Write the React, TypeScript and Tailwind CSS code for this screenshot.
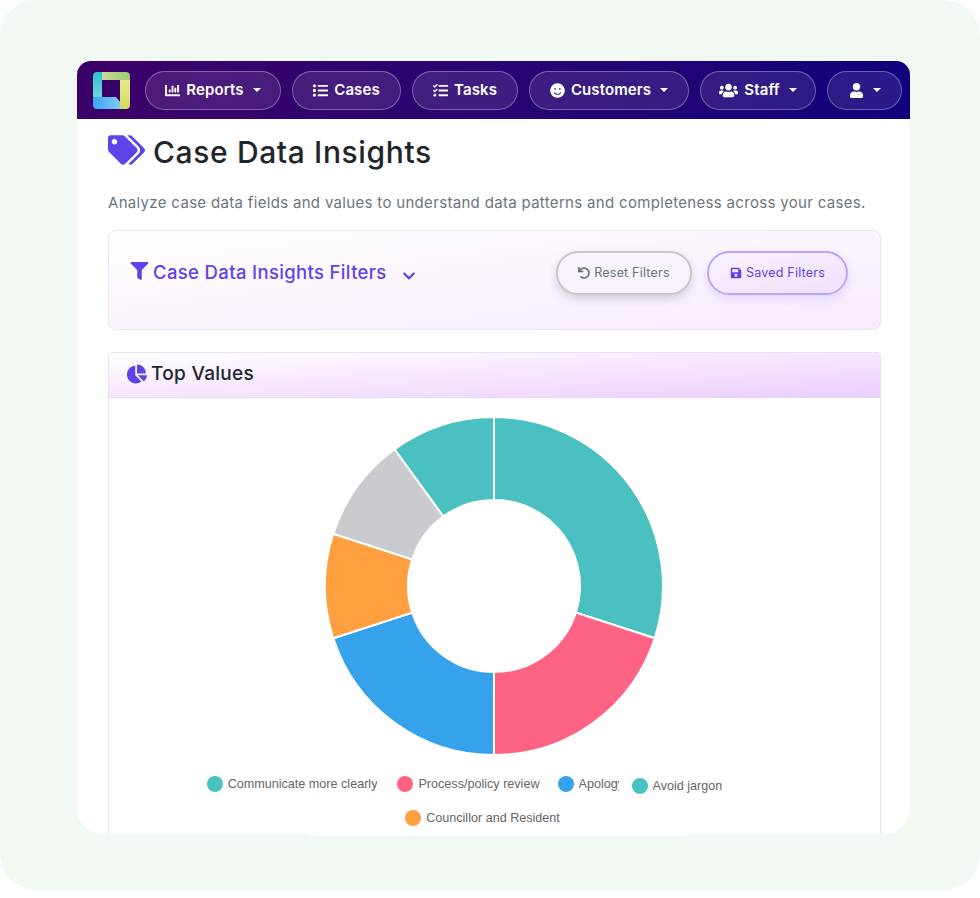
import React from "react";
import { FaChartBar, FaChartPie, FaChevronDown, FaFilter, FaList, FaSave, FaSmile, FaTags, FaTasks, FaUndo, FaUser, FaUsers } from "react-icons/fa";

const font = { fontFamily: "Inter, 'Noto Sans', sans-serif" };

type NavItem = {
  label?: string;
  icon: React.ReactNode;
  caret?: boolean;
  width: string;
};

const navItems: NavItem[] = [
  { label: "Reports", icon: <FaChartBar className="h-[15px] w-[15px]" />, caret: true, width: "ml-[4px] w-[136px]" },
  { label: "Cases", icon: <FaList className="h-[15px] w-[15px]" />, width: "w-[109px]" },
  { label: "Tasks", icon: <FaTasks className="h-[15px] w-[15px]" />, width: "w-[106px]" },
  { label: "Customers", icon: <FaSmile className="h-[15px] w-[15px]" />, caret: true, width: "w-[160px]" },
  { label: "Staff", icon: <FaUsers className="h-[19px] w-[19px]" />, caret: true, width: "w-[116px]" },
  { icon: <FaUser className="h-[15px] w-[15px]" />, caret: true, width: "w-[75px]" },
];

const segments = [
  { from: 0, to: 108, color: "#4bc0c0" },
  { from: 108, to: 180, color: "#ff6384" },
  { from: 180, to: 252, color: "#36a2eb" },
  { from: 252, to: 288, color: "#ff9f40" },
  { from: 288, to: 324, color: "#c9cbcf" },
  { from: 324, to: 360, color: "#4bc0c0" },
];

function point(r: number, deg: number) {
  const rad = (deg * Math.PI) / 180;
  return `${(170 + r * Math.sin(rad)).toFixed(2)} ${(170 - r * Math.cos(rad)).toFixed(2)}`;
}

function arcPath(from: number, to: number) {
  const large = to - from > 180 ? 1 : 0;
  return `M${point(169, from)} A169 169 0 ${large} 1 ${point(169, to)} L${point(86, to)} A86 86 0 ${large} 0 ${point(86, from)} Z`;
}

function Logo() {
  return (
    <svg width="37" height="37" viewBox="0 0 37 37" className="shrink-0">
      <defs>
        <linearGradient id="logoLeft" x1="0" y1="0" x2="0" y2="1">
          <stop offset="0" stopColor="#2cc0d0" />
          <stop offset="1" stopColor="#6fd6e0" />
        </linearGradient>
        <linearGradient id="logoTop" x1="0" y1="0" x2="1" y2="0">
          <stop offset="0" stopColor="#c5dc9c" />
          <stop offset="1" stopColor="#9ccb6c" />
        </linearGradient>
        <linearGradient id="logoRight" x1="0" y1="0" x2="0" y2="1">
          <stop offset="0" stopColor="#e6eb90" />
          <stop offset="1" stopColor="#d4dc5c" />
        </linearGradient>
        <linearGradient id="logoBottom" x1="0" y1="0" x2="1" y2="0">
          <stop offset="0" stopColor="#38a6f0" />
          <stop offset="1" stopColor="#80c8f8" />
        </linearGradient>
      </defs>
      <path d="M4 0H9V25H0V4A4 4 0 0 1 4 0Z" fill="url(#logoLeft)" />
      <path d="M9 0H33A4 4 0 0 1 37 4V8H9Z" fill="url(#logoTop)" />
      <path d="M27 8H37V33A4 4 0 0 1 33 37H27Z" fill="url(#logoRight)" />
      <path d="M0 25H23L27 30V37H4A4 4 0 0 1 0 33Z" fill="url(#logoBottom)" />
    </svg>
  );
}

function NavButton({ item }: { item: NavItem }) {
  return (
    <button
      className={`flex h-[39px] items-center justify-center gap-[6px] rounded-full border-[1.5px] border-white/30 bg-white/10 text-[15px] font-semibold tracking-[0.1px] text-white ${item.width}`}
    >
      {item.icon}
      {item.label && <span>{item.label}</span>}
      {item.caret && <span className="ml-[3px] h-0 w-0 border-x-[4px] border-t-[4px] border-x-transparent border-t-white" />}
    </button>
  );
}

function LegendItem({ color, label, textWidth, className = "" }: { color: string; label: string; textWidth?: string; className?: string }) {
  return (
    <div className={`flex items-center gap-[5px] ${className}`}>
      <span className="h-4 w-4 shrink-0 rounded-full" style={{ backgroundColor: color }} />
      <span className={`overflow-hidden whitespace-nowrap ${textWidth ?? ""}`}>{label}</span>
    </div>
  );
}

export default function App() {
  return (
    <div className="min-h-[898px] bg-white" style={font}>
      <div className="h-[890px] rounded-[36px] bg-[#f2f9f3] pl-[77px] pr-[70px] pt-[61px]">
        <div className="relative h-[773px] rounded-b-[26px] rounded-t-[14px] bg-white">
          <nav className="flex h-[58px] items-center gap-[11px] rounded-t-[14px] bg-gradient-to-r from-[#3c0068] to-[#10007c] pl-[16px] pr-2">
            <Logo />
            {navItems.map((item, i) => (
              <NavButton key={i} item={item} />
            ))}
          </nav>

          <div className="h-[715px] overflow-hidden px-[31px]">
            <div className="flex items-center gap-[8px] pt-[13px]">
              <FaTags className="h-[30px] w-[37px] -translate-y-[2px] text-[#5f43e9]" />
              <h1 className="text-[30px] font-medium leading-[40px] tracking-[0.62px] text-[#212529]">Case Data Insights</h1>
            </div>
            <p className="mt-[20px] text-[15px] leading-[22px] tracking-[0.32px] text-[#6c757d]">
              Analyze case data fields and values to understand data patterns and completeness across your cases.
            </p>

            <section className="mt-[16px] flex h-[100px] w-[773px] rounded-[8px] border border-[#e9e4f0] bg-gradient-to-br from-white to-[#f7ebfd] pl-[21px] pr-[32px] pt-[20px]">
              <div className="flex h-[44px] flex-1 items-center text-[#5f43e9]">
                <FaFilter className="h-[18px] w-[19px] -translate-y-[2px]" />
                <span className="ml-[4px] text-[18.5px] font-medium tracking-[0.35px]">Case Data Insights Filters</span>
                <FaChevronDown className="ml-[14px] h-[14px] w-[16px] translate-y-[3px]" />
              </div>
              <button className="flex h-[44px] w-[136px] items-center justify-center gap-[4px] rounded-full border-2 border-[#c9c7cc] bg-[#f8f3fc] text-[12.5px] tracking-[0.2px] text-[#6c757d] shadow-[0_4px_10px_rgba(0,0,0,0.15)]">
                <FaUndo className="h-[12px] w-[12px]" />
                Reset Filters
              </button>
              <button className="ml-[15px] flex h-[44px] w-[141px] items-center justify-center gap-[4px] rounded-full border-2 border-[#b9a9f5] bg-gradient-to-br from-[#f8f2fd] to-[#f1e0fc] text-[12.5px] tracking-[0.2px] text-[#5f43e9] shadow-[0_4px_10px_rgba(95,67,233,0.15)]">
                <FaSave className="h-[12px] w-[12px]" />
                Saved Filters
              </button>
            </section>

            <section className="mt-[22px] h-[500px] w-[773px] rounded-t-[4px] border-x border-t border-[#e6e4ea]">
              <div className="flex h-[45px] items-center gap-[4px] border-b border-[#e5d9ee] bg-gradient-to-br from-white to-[#edcdfd] pb-[2px] pl-[18px]">
                <FaChartPie className="h-[20px] w-[20px] text-[#5f43e9]" />
                <h2 className="text-[19px] font-medium tracking-[0.3px] text-[#212529]">Top Values</h2>
              </div>
              <div className="flex justify-center pr-[1px] pt-[18px]">
                <svg width="340" height="340" viewBox="0 0 340 340">
                  {segments.map((s) => (
                    <path key={s.from} d={arcPath(s.from, s.to)} fill={s.color} stroke="#fff" strokeWidth="2" />
                  ))}
                </svg>
              </div>
              <div className="mt-[20px] flex flex-col items-center text-[12.6px] leading-[16px] text-[#666666]" style={{ fontFamily: "'Liberation Sans', Arial, sans-serif" }}>
                <div className="flex h-[18px] items-start overflow-hidden pr-[60px]">
                  <LegendItem color="#4bc0c0" label="Communicate more clearly" />
                  <LegendItem color="#ff6384" label="Process/policy review" className="ml-[20px]" />
                  <LegendItem color="#36a2eb" label="Apology" textWidth="w-[40px]" className="ml-[18px]" />
                  <LegendItem color="#4bc0c0" label="Avoid jargon" className="ml-[13px] translate-y-[2px]" />
                </div>
                <div className="mt-[16px] flex items-center pr-[24px]">
                  <LegendItem color="#ff9f40" label="Councillor and Resident" />
                </div>
              </div>
            </section>
          </div>

          <div className="absolute left-[233px] top-[773px] h-[2px] w-[377px] bg-white" />
        </div>
      </div>
    </div>
  );
}
